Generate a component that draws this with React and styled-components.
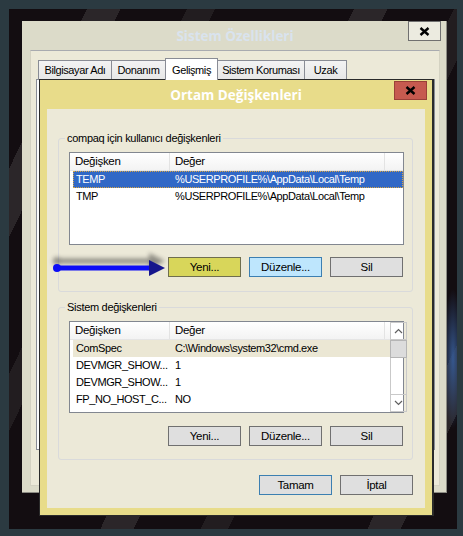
import React from "react";
import styled, { createGlobalStyle, css } from "styled-components";

const GlobalStyle = createGlobalStyle`
  html, body {
    margin: 0;
    padding: 0;
    background: #2b3a41;
  }
  body {
    font-family: "Liberation Sans", Arial, sans-serif;
    font-size: 11px;
    letter-spacing: -0.3px;
    color: #000;
  }
`;

const Frame = styled.div`
  width: 463px;
  height: 536px;
  box-sizing: border-box;
  padding: 9px 6px 7px 9px;
  background: #2b3a41;
`;

const Desktop = styled.div`
  position: relative;
  height: 100%;
  overflow: hidden;
  background:
    radial-gradient(ellipse 10px 70px at 444px 350px, #35578e, transparent),
    repeating-linear-gradient(
      116deg,
      #130d11 0 70px,
      #2b2629 70px 100px,
      #130d11 100px 160px,
      #221d20 160px 185px,
      #130d11 185px 240px
    );
`;

/* ---- back window: Sistem Özellikleri ---- */

const BackWindow = styled.div`
  position: absolute;
  left: 13px;
  top: 12px;
  width: 425px;
  height: 472px;
  box-sizing: border-box;
  background: #dcdbc9;
  border-right: 1px solid #8d8c84;
  border-bottom: 1px solid #8d8c84;
  display: flex;
  flex-direction: column;
  padding: 0 6px 6px 8px;
`;

const TitleBar = styled.div`
  position: relative;
  height: ${({ $h }) => $h}px;
  flex-shrink: 0;
  display: flex;
  align-items: center;
  justify-content: center;
  font-family: "Open Sans", "Noto Sans", sans-serif;
  font-weight: 700;
  font-size: 13.5px;
  letter-spacing: 0;
  color: ${({ $color }) => $color};
`;

const CloseButton = styled.div`
  position: absolute;
  right: ${({ $right }) => $right}px;
  top: ${({ $top }) => $top}px;
  width: 33px;
  height: ${({ $h }) => $h}px;
  box-sizing: border-box;
  display: flex;
  align-items: center;
  justify-content: center;
  background: ${({ $bg }) => $bg};
  border: 1px solid ${({ $border }) => $border};
`;

const BackPanel = styled.div`
  flex: 1;
  background: #ece9d8;
  border: 1px solid #d4d2c2;
  border-top-color: #a9abb0;
  padding: 7px 4px 0 5px;
`;

const TabStrip = styled.div`
  display: flex;
  align-items: flex-end;
  height: 21px;
  padding-left: 3px;
`;

const Tab = styled.div`
  width: ${({ $w }) => $w}px;
  height: ${({ $active }) => ($active ? 22 : 19)}px;
  box-sizing: border-box;
  margin-left: -1px;
  margin-bottom: ${({ $active }) => ($active ? -1 : 0)}px;
  border: 1px solid #898c95;
  border-bottom: none;
  background: ${({ $active }) =>
    $active ? "#fff" : "linear-gradient(#f3f3f3, #e7e7e7)"};
  position: relative;
  z-index: ${({ $active }) => ($active ? 1 : 0)};
  display: flex;
  align-items: center;
  justify-content: center;
  font-size: 11px;
  letter-spacing: -0.4px;
  white-space: nowrap;
`;

const TabPage = styled.div`
  height: 371px;
  box-sizing: border-box;
  border: 1px solid #898c95;
  background: #fbfbfb;
`;

/* ---- front dialog: Ortam Değişkenleri ---- */

const Dialog = styled.div`
  position: absolute;
  left: 30px;
  top: 70px;
  width: 395px;
  height: 437px;
  box-sizing: border-box;
  background: #e8dc8a;
  border: 1px solid #2a2a2a;
  border-right-width: 2px;
  display: flex;
  flex-direction: column;
`;

const DialogBody = styled.div`
  position: relative;
  flex: 1;
  margin: 0 7px 7px;
  background: #ece9d8;
  padding: 29px 12px 13px 11px;
  display: flex;
  flex-direction: column;
  gap: 15px;
`;

const Group = styled.div`
  position: relative;
  border: 1px solid #d9dadb;
  border-radius: 3px;
  padding: 13px 8px ${({ $bottom }) => $bottom}px 10px;
`;

const GroupTitle = styled.span`
  position: absolute;
  top: -8px;
  left: 6px;
  padding: 0 2px;
  background: #ece9d8;
  font-size: 11px;
  line-height: 14px;
`;

const ListView = styled.div`
  height: ${({ $h }) => $h}px;
  box-sizing: border-box;
  border: 1px solid #828790;
  background: #fff;
  display: grid;
  grid-template-columns: 1fr auto;
`;

const ListContent = styled.div`
  display: flex;
  flex-direction: column;
`;

const HeaderRow = styled.div`
  display: grid;
  grid-template-columns: 100px 215px 1fr;
  height: 17px;
  background: linear-gradient(#ffffff, #f3f3f3);
  border-bottom: 1px solid #e5e5e5;
`;

const HeaderCell = styled.div`
  padding-left: 5px;
  line-height: 17px;
  font-size: 11.5px;
  border-right: 1px solid #e3e3e3;
  &:last-child {
    border-right: none;
  }
`;

const Row = styled.div`
  display: grid;
  grid-template-columns: 97px 215px;
  margin-left: 3px;
  height: 17px;
  line-height: 17px;
  font-size: 11px;
  letter-spacing: -0.4px;
  white-space: nowrap;
  ${({ $state }) =>
    $state === "selected" &&
    css`
      background: #3168c6;
      color: #fff;
      outline: 1px dotted #d9a441;
      outline-offset: -1px;
    `}
  ${({ $state }) =>
    $state === "inactive" &&
    css`
      background: #ebe7d4;
    `}
`;

const Cell = styled.div`
  padding-left: ${({ $pad }) => $pad}px;
  overflow: hidden;
`;

const ScrollBar = styled.div`
  width: 17px;
  box-sizing: border-box;
  border: 1px solid #c9c9c9;
  display: flex;
  flex-direction: column;
`;

const ScrollArrow = styled.div`
  height: 16px;
  display: flex;
  align-items: center;
  justify-content: center;
  border-${({ $side }) => $side}: 1px solid #c9c9c9;
`;

const ScrollThumb = styled.div`
  height: 16px;
  background: #dcdcdc;
  border: 1px solid #b5b5b5;
  margin: 0 -1px;
`;

const ScrollTrack = styled.div`
  flex: 1;
`;

const ButtonRow = styled.div`
  display: flex;
  justify-content: flex-end;
  gap: 8px;
  margin-top: ${({ $top }) => $top}px;
  margin-right: ${({ $right }) => $right}px;
  position: relative;
`;

const Button = styled.div`
  position: relative;
  width: 73px;
  height: 20px;
  box-sizing: border-box;
  border: 1px solid #707070;
  background: #dfdfdf;
  display: flex;
  align-items: center;
  justify-content: center;
  font-size: 11.5px;
  ${({ $variant }) =>
    $variant === "hover" &&
    css`
      background: #bee6fd;
      border-color: #3c7fb1;
    `}
  ${({ $variant }) =>
    $variant === "default" &&
    css`
      border-color: #3c7fb1;
    `}
  ${({ $variant }) =>
    $variant === "marked" &&
    css`
      background: #d8d65a;
      border-color: #6f6e4e;
      &::before {
        content: "";
        position: absolute;
        left: -17px;
        right: -8px;
        top: -9px;
        bottom: -10px;
        background: #ebe855;
        z-index: -1;
      }
    `}
`;

const Pointer = styled.svg`
  position: absolute;
  left: 4px;
  top: 146px;
  overflow: visible;
  filter: drop-shadow(0 -7px 2px rgba(30, 30, 30, 0.45));
`;

const Close = () => (
  <svg width="11" height="9" viewBox="0 0 11 9">
    <path d="M1.5 1 L9.5 8 M9.5 1 L1.5 8" stroke="#000" strokeWidth="2.4" />
  </svg>
);

const Chevron = ({ up }) => (
  <svg width="9" height="6" viewBox="0 0 9 6">
    <polyline
      points={up ? "1,5 4.5,1.5 8,5" : "1,1 4.5,4.5 8,1"}
      fill="none"
      stroke="#606060"
      strokeWidth="1.2"
    />
  </svg>
);

const userVars = [
  { name: "TEMP", value: "%USERPROFILE%\\AppData\\Local\\Temp", state: "selected" },
  { name: "TMP", value: "%USERPROFILE%\\AppData\\Local\\Temp" },
];

const systemVars = [
  { name: "ComSpec", value: "C:\\Windows\\system32\\cmd.exe", state: "inactive" },
  { name: "DEVMGR_SHOW...", value: "1" },
  { name: "DEVMGR_SHOW...", value: "1" },
  { name: "FP_NO_HOST_C...", value: "NO" },
];

const tabs = [
  { label: "Bilgisayar Adı", w: 74 },
  { label: "Donanım", w: 55 },
  { label: "Gelişmiş", w: 53 },
  { label: "Sistem Koruması", w: 88 },
  { label: "Uzak", w: 43 },
];

const VarList = ({ rows, height, scroll }) => (
  <ListView $h={height}>
    <ListContent>
      <HeaderRow>
        <HeaderCell>Değişken</HeaderCell>
        <HeaderCell>Değer</HeaderCell>
        <HeaderCell />
      </HeaderRow>
      {rows.map((r, i) => (
        <Row key={i} $state={r.state}>
          <Cell $pad={3}>{r.name}</Cell>
          <Cell $pad={5}>{r.value}</Cell>
        </Row>
      ))}
    </ListContent>
    {scroll && (
      <ScrollBar>
        <ScrollArrow $side="bottom">
          <Chevron up />
        </ScrollArrow>
        <ScrollThumb />
        <ScrollTrack />
        <ScrollArrow $side="top">
          <Chevron />
        </ScrollArrow>
      </ScrollBar>
    )}
  </ListView>
);

const App = () => {
  return (
    <Frame>
      <GlobalStyle />
      <Desktop>
        <BackWindow>
          <TitleBar $h={29} $color="#d9e3ee">
            Sistem Özellikleri
            <CloseButton $right={-1} $top={0} $h={20} $bg="#ecebe0" $border="#707070">
              <Close />
            </CloseButton>
          </TitleBar>
          <BackPanel>
            <TabStrip>
              {tabs.map((t) => (
                <Tab key={t.label} $w={t.w} $active={t.label === "Gelişmiş"}>
                  {t.label}
                </Tab>
              ))}
            </TabStrip>
            <TabPage />
          </BackPanel>
        </BackWindow>

        <Dialog>
          <TitleBar $h={29} $color="#fff">
            Ortam Değişkenleri
            <CloseButton $right={5} $top={1} $h={19} $bg="#c65a4f" $border="#9a4038">
              <Close />
            </CloseButton>
          </TitleBar>
          <DialogBody>
            <Group $bottom={14}>
              <GroupTitle>compaq için kullanıcı değişkenleri</GroupTitle>
              <VarList rows={userVars} height={93} />
              <ButtonRow $top={12} $right={1}>
                <Button $variant="marked">Yeni...</Button>
                <Button $variant="hover">Düzenle...</Button>
                <Button>Sil</Button>
              </ButtonRow>
            </Group>

            <Group $bottom={13}>
              <GroupTitle>Sistem değişkenleri</GroupTitle>
              <VarList rows={systemVars} height={92} scroll />
              <ButtonRow $top={13} $right={1}>
                <Button>Yeni...</Button>
                <Button>Düzenle...</Button>
                <Button>Sil</Button>
              </ButtonRow>
            </Group>

            <ButtonRow $top={0} $right={0}>
              <Button $variant="default">Tamam</Button>
              <Button>İptal</Button>
            </ButtonRow>

            <Pointer width="116" height="24" viewBox="0 0 116 24">
              <line x1="6" y1="13" x2="100" y2="13" stroke="#0c0cf6" strokeWidth="5" />
              <circle cx="6" cy="13" r="4" fill="#0c0cf6" />
              <polygon points="98,5 114,13 98,21" fill="#16168c" />
            </Pointer>
          </DialogBody>
        </Dialog>
      </Desktop>
    </Frame>
  );
};

export default App;
